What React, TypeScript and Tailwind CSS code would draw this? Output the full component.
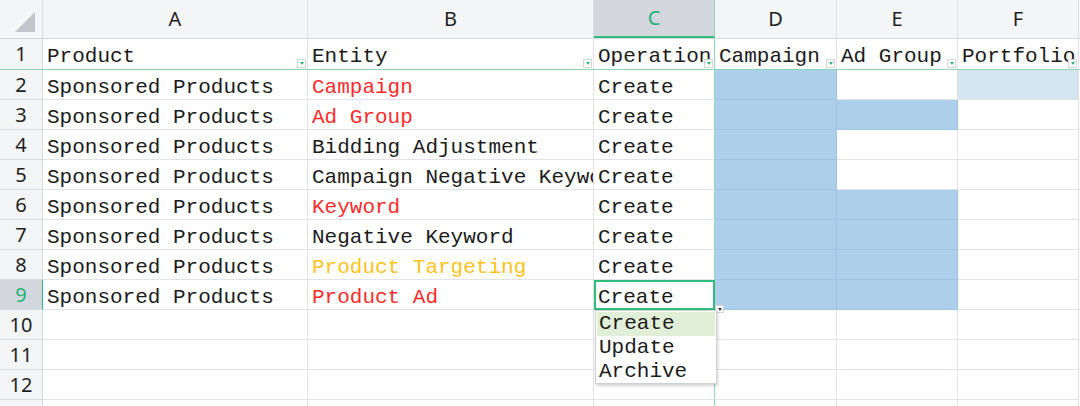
import React from 'react';

const cols = [
    { key: 'A', w: 'w-[265px]' },
    { key: 'B', w: 'w-[286px]' },
    { key: 'C', w: 'w-[121px]' },
    { key: 'D', w: 'w-[122px]' },
    { key: 'E', w: 'w-[121px]' },
    { key: 'F', w: 'w-[121px]' },
];

const headers = ['Product', 'Entity', 'Operation', 'Campaign', 'Ad Group', 'Portfolio'];

type Row = { entity: string; color: string; fill: string[] };

// fill: background for columns D, E, F
const rows: Row[] = [
    { entity: 'Campaign', color: 'text-[#ff2b2b]', fill: ['blue', '', 'pale'] },
    { entity: 'Ad Group', color: 'text-[#ff2b2b]', fill: ['blue', 'blue', ''] },
    { entity: 'Bidding Adjustment', color: 'text-[#1b1b1b]', fill: ['blue', '', ''] },
    { entity: 'Campaign Negative Keyword', color: 'text-[#1b1b1b]', fill: ['blue', '', ''] },
    { entity: 'Keyword', color: 'text-[#ff2b2b]', fill: ['blue', 'blue', ''] },
    { entity: 'Negative Keyword', color: 'text-[#1b1b1b]', fill: ['blue', 'blue', ''] },
    { entity: 'Product Targeting', color: 'text-[#ffc21a]', fill: ['blue', 'blue', ''] },
    { entity: 'Product Ad', color: 'text-[#ff2b2b]', fill: ['blue', 'blue', ''] },
];

const mono = "font-['Liberation_Mono','Courier_New',monospace] text-[21px]";
const sans = "font-['Noto_Sans',sans-serif] text-[20px]";

function FilterButton() {
    return (
        <span className="absolute right-[1px] bottom-[1px] w-[9px] h-[9px] bg-white border border-[#d4d6dc] flex items-center justify-center">
            <span className="w-0 h-0 border-l-[2px] border-r-[2px] border-t-[3px] border-l-transparent border-r-transparent border-t-[#2bb673]" />
        </span>
    );
}

function fillClass(f: string) {
    if (f === 'blue') return 'bg-[#acd0ec] border-r-[#9fc5e6] border-b-[#9fc5e6]';
    if (f === 'pale') return 'bg-[#d3e6ef]';
    return 'bg-white';
}

function App() {
    const cell = 'relative h-[30px] shrink-0 border-r border-b border-[#e2e3ea] overflow-hidden whitespace-nowrap';
    const rowHead = `w-[43px] h-[30px] shrink-0 border-r border-b border-[#d9dbe2] bg-[#f4f5f7] flex items-center justify-center ${sans} text-[#1f1f1f]`;

    return (
        <div className="w-[1080px] h-[406px] overflow-hidden bg-white select-none">
            {/* column letters */}
            <div className="flex h-[39px] bg-[#f4f5f7] border-b border-[#d5d7de]">
                <div className="w-[43px] shrink-0 border-r border-[#d9dbe2] relative">
                    <svg className="absolute left-[15px] top-[12px]" width="20" height="20" viewBox="0 0 20 20">
                        <polygon points="20,0 20,20 0,20" fill="#c4c6cb" />
                    </svg>
                </div>
                {cols.map(c => (
                    <div
                        key={c.key}
                        className={`${c.w} shrink-0 flex items-center justify-center ${sans} ${c.key === 'C'
                            ? 'bg-[#d3d6dc] text-[#21b574] border-r border-r-[#8fd9b6] border-b-2 border-b-[#2ebd7c]'
                            : 'text-[#1f1f1f] border-r border-[#dfe0e6]'}`}>
                        {c.key}
                    </div>
                ))}
                <div className="flex-1" />
            </div>

            {/* row 1: filter headers, frozen line underneath */}
            <div className="flex h-[31px] border-b border-[#8fd3b0]">
                <div className={`${rowHead} !h-[30px] border-b-0`}>1</div>
                {cols.map((c, i) => (
                    <div key={c.key} className={`${cell} ${c.w} border-b-0 ${c.key === 'C' ? 'border-r-[#8fd9b6]' : ''} ${mono} text-[#1b1b1b] pl-[4px] pt-[2px]`}>
                        {headers[i]}
                        <FilterButton />
                    </div>
                ))}
                <div className="flex-1" />
            </div>

            {/* data rows */}
            {rows.map((r, ri) => {
                const n = ri + 2;
                const selected = n === 9;
                return (
                    <div key={n} className="flex">
                        <div className={`${rowHead} ${selected ? '!bg-[#d3d6dc] !text-[#21b574] border-r-[#2ebd7c]' : ''}`}>{n}</div>
                        <div className={`${cell} w-[265px] ${mono} text-[#1b1b1b] pl-[4px] pt-[2px]`}>Sponsored Products</div>
                        <div className={`${cell} w-[286px] ${mono} ${r.color} pl-[4px] pt-[2px]`}>{r.entity}</div>
                        <div className={`${selected ? 'relative h-[30px] shrink-0 border-2 border-[#2ebd7c] overflow-visible' : `${cell} border-r-[#8fd9b6]`} w-[121px] ${mono} text-[#1b1b1b] ${selected ? 'pl-[2px] pt-0' : 'pl-[4px] pt-[2px]'}`}>
                            <span className="block overflow-hidden">Create</span>
                            {selected && (
                                <>
                                    <span className="absolute right-[-11px] bottom-[-5px] w-[9px] h-[8px] bg-white border border-[#d4d6dc] flex items-center justify-center z-10">
                                        <span className="w-0 h-0 border-l-[2px] border-r-[2px] border-t-[3px] border-l-transparent border-r-transparent border-t-[#333]" />
                                    </span>
                                    {/* validation list */}
                                    <div className="absolute left-[-1px] top-[28px] w-[122px] h-[74px] bg-white border border-[#cfd1d6] shadow-[1px_2px_3px_rgba(0,0,0,0.18)] z-20 pt-[1px] px-[1px] leading-[24px]">
                                        <div className="bg-[#e1eed8] pl-[2px] h-[24px]">Create</div>
                                        <div className="pl-[2px] h-[24px]">Update</div>
                                        <div className="pl-[2px] h-[24px]">Archive</div>
                                    </div>
                                </>
                            )}
                        </div>
                        {r.fill.map((f, fi) => (
                            <div key={fi} className={`${cell} ${fi === 0 ? 'w-[122px]' : 'w-[121px]'} ${fillClass(f)}`} />
                        ))}
                        <div className="flex-1 h-[30px]" />
                    </div>
                );
            })}

            {/* empty rows */}
            {[10, 11, 12, 13].map(n => (
                <div key={n} className="flex">
                    <div className={rowHead}>{n}</div>
                    {cols.map(c => (
                        <div key={c.key} className={`${cell} ${c.w} ${c.key === 'C' ? 'border-r-[#8fd9b6]' : ''}`} />
                    ))}
                    <div className="flex-1 h-[30px]" />
                </div>
            ))}
        </div>
    );
}

export default App;
